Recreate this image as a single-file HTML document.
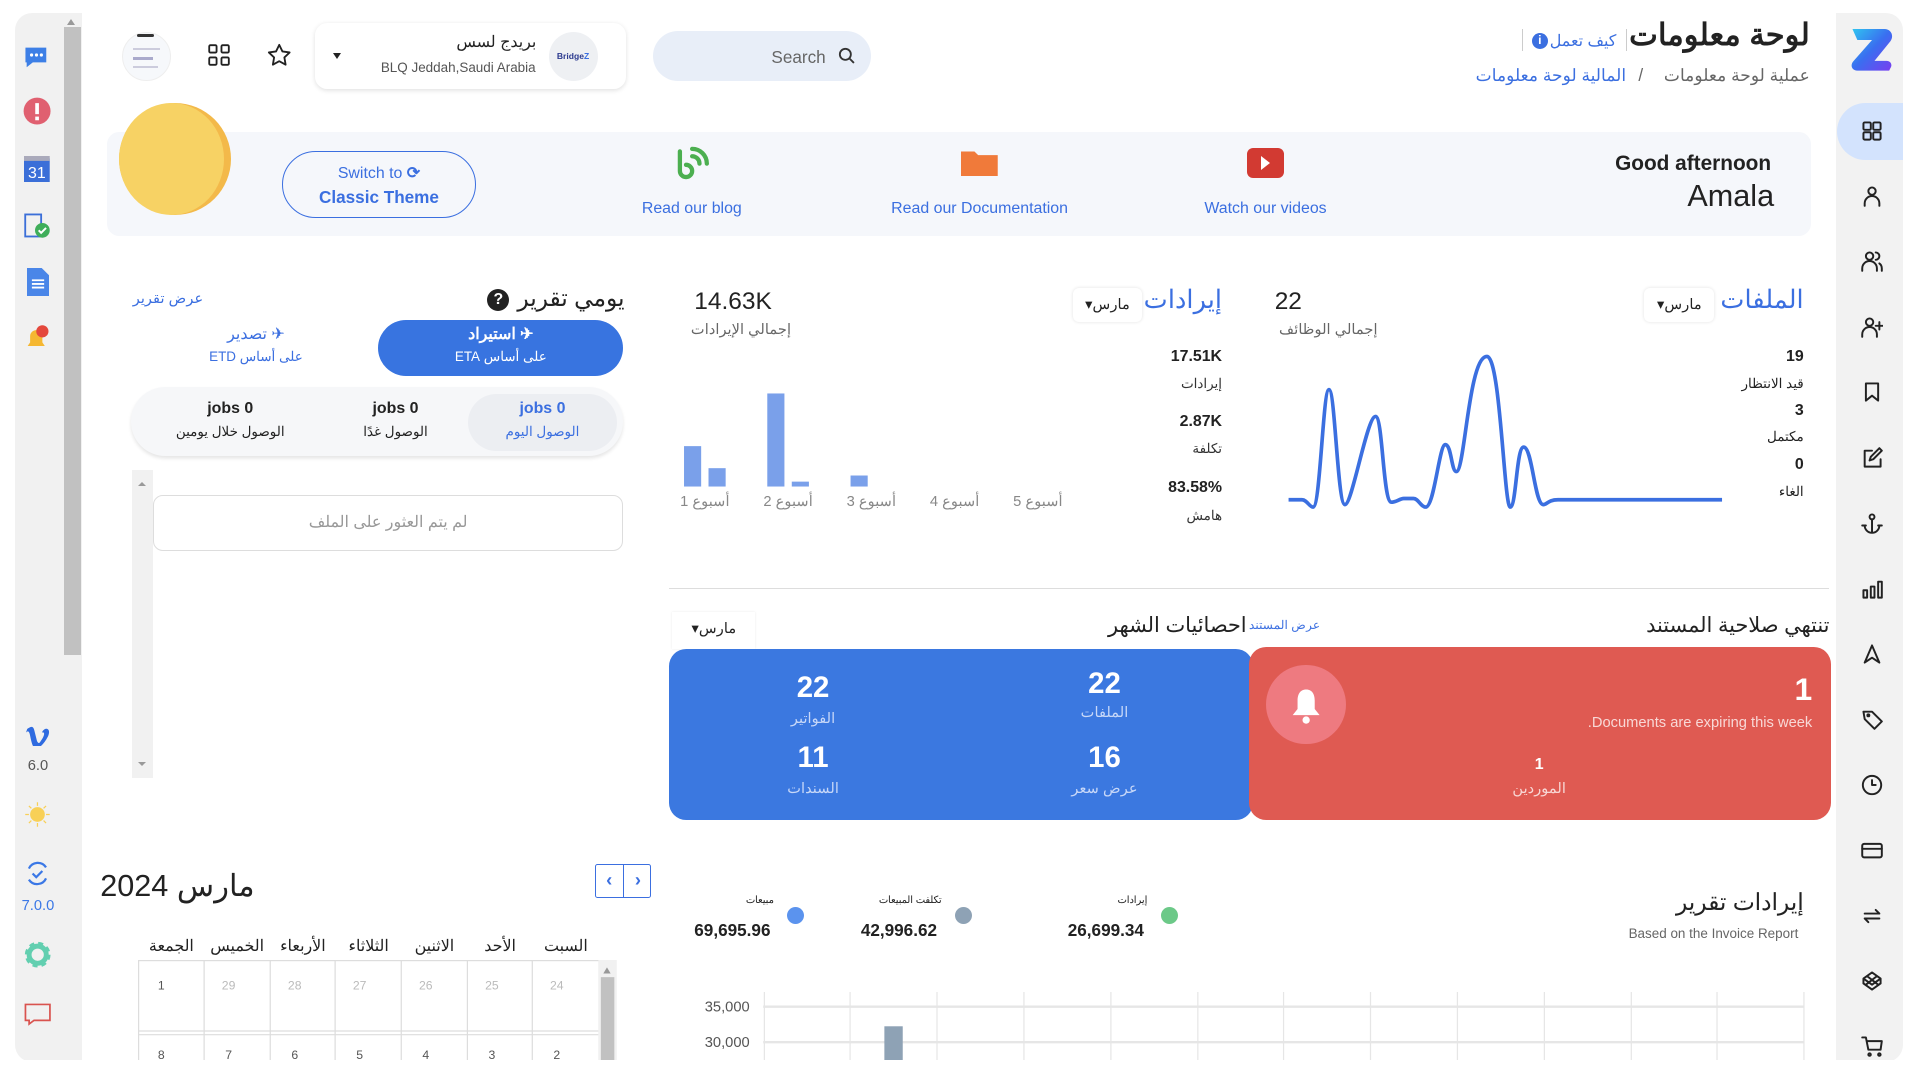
<!DOCTYPE html>
<html><head><meta charset="utf-8">
<style>
*{box-sizing:border-box;margin:0;padding:0}
html,body{width:1920px;height:1080px;overflow:hidden;background:#fff}
#w{zoom:1.22449;width:1568px;height:882px;position:relative;overflow:hidden;font-family:"Liberation Sans","Noto Sans CJK SC",sans-serif;color:#222}
.a{position:absolute}
.r{text-align:right;direction:rtl}
.c{text-align:center}
.blue{color:#3b6fe0}
.ico{width:18px;height:18px;fill:none;stroke:#222;stroke-width:1.6;stroke-linecap:round;stroke-linejoin:round}
</style></head><body><div id="w">

<!-- left sidebar -->
<div class="a" style="left:12px;top:11px;width:55px;height:856px;background:#f1f1f1;border-radius:14px 0 0 14px"></div>
<div class="a" style="left:52px;top:22px;width:14px;height:513px;background:#c1c1c1"></div>
<div class="a" style="left:55px;top:12px;width:0;height:0;border:4px solid transparent;border-bottom:5px solid #999"></div>
<svg class="a" style="left:19px;top:36px" width="22" height="22" viewBox="0 0 22 22"><path d="M2 3h17v12H8l-5 4v-4H2z" fill="#3d7fe6"/><circle cx="7" cy="9" r="1.3" fill="#fff"/><circle cx="11" cy="9" r="1.3" fill="#fff"/><circle cx="15" cy="9" r="1.3" fill="#fff"/></svg>
<svg class="a" style="left:19px;top:79px" width="23" height="23"><circle cx="11.5" cy="11.5" r="11" fill="#e06070"/><rect x="10" y="5" width="3" height="9" fill="#fff"/><rect x="10" y="16" width="3" height="3" fill="#fff"/></svg>
<svg class="a" style="left:20px;top:127px" width="21" height="22"><rect x="0" y="2" width="21" height="20" fill="#3b6fd8"/><rect x="0" y="0" width="21" height="4" fill="#aab"/><text x="10.5" y="18" font-size="13" fill="#fff" text-anchor="middle" font-family="Liberation Sans">31</text></svg>
<svg class="a" style="left:20px;top:173px" width="22" height="22"><rect x="1" y="2" width="13" height="18" fill="none" stroke="#3b6fd8" stroke-width="1.5"/><circle cx="15" cy="15" r="6" fill="#3fae5a"/><path d="M12 15l2 2 4-4" stroke="#fff" fill="none" stroke-width="1.6"/></svg>
<svg class="a" style="left:22px;top:219px" width="18" height="23"><path d="M0 0h12l6 6v17H0z" fill="#4a86e8"/><path d="M4 10h10M4 13h10M4 16h10" stroke="#fff" stroke-width="1.5"/></svg>
<svg class="a" style="left:20px;top:265px" width="22" height="22"><path d="M3 18h14l-2-3v-5a5 5 0 0 0-10 0v5z" fill="#f5b731"/><circle cx="15" cy="6" r="5" fill="#e4483c"/></svg>
<svg class="a" style="left:21px;top:591px" width="20" height="18"><path d="M1 4c3-2 5-3 6 2l2 8c1 2 2 2 3 0 3-4 4-8 1-7 2-5 8-4 5 3-3 6-7 10-10 10-3 0-4-8-5-12-1-3-2-2-3-1z" fill="#2f6be0"/></svg>
<div class="a c" style="left:12px;top:619px;width:38px;font-size:12px;color:#555">6.0</div>
<svg class="a" style="left:20px;top:654px" width="22" height="22"><circle cx="11" cy="11" r="6" fill="#f8d057"/><g stroke="#f8d057" stroke-width="1"><path d="M11 1v3M11 18v3M1 11h3M18 11h3M4 4l2 2M16 16l2 2M4 18l2-2M16 6l2-2"/></g></svg>
<svg class="a" style="left:20px;top:702px" width="22" height="22" fill="none" stroke="#3b78e6" stroke-width="1.8"><path d="M4 7a8 8 0 0 1 14-1M18 15a8 8 0 0 1-14 1"/><path d="M7 11l3 3 5-5"/></svg>
<div class="a c" style="left:12px;top:733px;width:38px;font-size:12px;color:#3b78e6">7.0.0</div>
<svg class="a" style="left:19px;top:768px" width="24" height="24"><circle cx="12" cy="12" r="8" fill="none" stroke="#62cfb0" stroke-width="5" stroke-dasharray="3.5 2.8"/><circle cx="12" cy="12" r="7" fill="none" stroke="#62cfb0" stroke-width="4"/></svg>
<svg class="a" style="left:19px;top:818px" width="24" height="20" fill="none" stroke="#d9534f" stroke-width="1.4"><path d="M2 2h20v13H9l-4 3v-3H2z"/></svg>

<!-- right sidebar -->
<div class="a" style="left:1499px;top:11px;width:55px;height:856px;background:#f2f2f2;border-radius:0 14px 14px 0"></div>
<svg class="a" style="left:1511px;top:24px" width="36" height="34" viewBox="0 0 36 34"><defs><linearGradient id="g" x1="0" y1="0" x2="1" y2="1"><stop offset="0" stop-color="#2fc6f0"/><stop offset=".5" stop-color="#3a6ef0"/><stop offset="1" stop-color="#7a3df0"/></linearGradient></defs><path d="M2 0h26c6 0 8 6 5 10L20 26h10c3 0 5 3 3 6l-1 2H6c-5 0-6-5-3-8L18 9H6z" fill="url(#g)"/></svg>
<div class="a" style="left:1500px;top:84px;width:54px;height:47px;background:#d3e3fd;border-radius:24px 0 0 24px"></div>
<svg class="a ico" style="left:1520px;top:98px"><rect x="2" y="2" width="6" height="6" rx="1"/><rect x="10" y="2" width="6" height="6" rx="1"/><rect x="2" y="10" width="6" height="6" rx="1"/><rect x="10" y="10" width="6" height="6" rx="1"/></svg>
<svg class="a ico" style="left:1520px;top:151px"><circle cx="9" cy="5" r="3"/><path d="M3 17v-2a6 6 0 0 1 12 0v2"/></svg>
<svg class="a ico" style="left:1520px;top:204px"><circle cx="7" cy="5" r="3"/><path d="M1 17v-2a6 6 0 0 1 12 0v2M12 2a3 3 0 0 1 0 6M15 11a5 5 0 0 1 2 4v2"/></svg>
<svg class="a ico" style="left:1520px;top:258px"><circle cx="7" cy="5" r="3"/><path d="M1 17v-2a6 6 0 0 1 12 0v2M15 5v6M12 8h6"/></svg>
<svg class="a ico" style="left:1520px;top:311px"><path d="M4 2h10v14l-5-4-5 4z"/></svg>
<svg class="a ico" style="left:1520px;top:365px"><path d="M9 3H3v13h13v-6M7 11l1-3 7-7 2 2-7 7z"/></svg>
<svg class="a ico" style="left:1520px;top:418px"><circle cx="9" cy="4" r="2"/><path d="M9 6v11M3 11a6 6 0 0 0 12 0M1 11h3M14 11h3"/></svg>
<svg class="a ico" style="left:1520px;top:472px"><rect x="2" y="10" width="3" height="6"/><rect x="8" y="7" width="3" height="9"/><rect x="14" y="3" width="3" height="13"/></svg>
<svg class="a ico" style="left:1520px;top:525px"><path d="M9 2l6 14-6-4-6 4z"/></svg>
<svg class="a ico" style="left:1520px;top:578px"><path d="M2 3h7l8 8-6 6-8-8z"/><circle cx="6" cy="6" r=".8"/></svg>
<svg class="a ico" style="left:1520px;top:632px"><circle cx="9" cy="9" r="7.5"/><path d="M9 5v4h3"/></svg>
<svg class="a ico" style="left:1520px;top:685px"><rect x="1" y="4" width="16" height="11" rx="1.5"/><path d="M1 8h16"/></svg>
<svg class="a ico" style="left:1520px;top:739px"><path d="M3 7h12l-3-3M15 11H3l3 3"/></svg>
<svg class="a ico" style="left:1520px;top:792px"><path d="M9 2l7 5-7 5-7-5zM2 7v4l7 5 7-5V7M5 5l9 7M13 5l-9 7"/></svg>
<svg class="a ico" style="left:1520px;top:845px"><path d="M1 2h3l2 10h10l1-7H5"/><circle cx="7" cy="16" r="1"/><circle cx="15" cy="16" r="1"/></svg>

<!-- header -->
<div class="a r" style="right:90px;top:15px;font-size:25px;font-weight:bold;color:#222">لوحة معلومات</div>
<div class="a" style="left:1328px;top:24px;width:1px;height:18px;background:#ccc"></div>
<div class="a" style="left:1243px;top:24px;width:1px;height:18px;background:#ccc"></div>
<div class="a r" style="right:248px;top:25px;font-size:13px" ><span class="blue">كيف تعمل</span></div>
<div class="a" style="left:1251px;top:27px;width:13px;height:13px;border-radius:50%;background:#3b6fe0;color:#fff;font-size:10px;font-weight:bold;text-align:center;line-height:13px">i</div>
<div class="a r" style="right:90px;top:53px;font-size:14px;color:#666">عملية لوحة معلومات</div>
<div class="a" style="left:1338px;top:53px;font-size:14px;color:#666">/</div>
<div class="a r" style="right:240px;top:53px;font-size:14px;color:#3b6fe0">المالية لوحة معلومات</div>

<div class="a" style="left:533px;top:25px;width:178px;height:41px;border-radius:21px;background:#e8eef8"></div>
<div class="a" style="left:630px;top:38px;font-size:14px;color:#666">Search</div>
<svg class="a" style="left:684px;top:38px" width="14" height="14" fill="none" stroke="#333" stroke-width="1.5"><circle cx="6" cy="6" r="4.5"/><path d="M9.5 9.5l3.5 3.5"/></svg>

<div class="a" style="left:257px;top:19px;width:254px;height:54px;border-radius:10px;background:#fff;box-shadow:0 1px 4px rgba(0,0,0,.12)"></div>
<div class="a r" style="right:1130px;top:26px;font-size:13px;color:#222">بريدج لسس</div>
<div class="a" style="left:311px;top:49px;font-size:11px;color:#555">BLQ Jeddah,Saudi Arabia</div>
<div class="a" style="left:448px;top:26px;width:40px;height:40px;border-radius:50%;background:#eef0f3;font-size:7px;font-weight:bold;text-align:center;line-height:40px;color:#2b3a8f">Bridge<span style="color:#3b6fe0">Z</span></div>
<div class="a" style="left:272px;top:43px;border:4px solid transparent;border-top:5px solid #222"></div>
<svg class="a" style="left:218px;top:35px" width="20" height="20" fill="none" stroke="#222" stroke-width="1.5" stroke-linejoin="round"><path d="M10 1.5l2.6 5.4 5.9.8-4.3 4.1 1 5.9L10 14.9l-5.2 2.8 1-5.9L1.5 7.7l5.9-.8z"/></svg>
<svg class="a" style="left:170px;top:36px" width="18" height="18" fill="none" stroke="#222" stroke-width="1.5"><rect x="1" y="1" width="6" height="6" rx="1"/><rect x="11" y="1" width="6" height="6" rx="1"/><rect x="1" y="11" width="6" height="6" rx="1"/><rect x="11" y="11" width="6" height="6" rx="1"/></svg>
<div class="a" style="left:100px;top:26px;width:40px;height:40px;border-radius:50%;background:#f6f8fb;border:1px solid #eee;overflow:hidden">
<div style="position:absolute;left:8px;top:12px;width:22px;height:2px;background:#ccd"></div>
<div style="position:absolute;left:8px;top:20px;width:16px;height:2px;background:#aac"></div>
<div style="position:absolute;left:8px;top:27px;width:20px;height:2px;background:#ccd"></div></div>
<div class="a" style="left:112px;top:28px;width:14px;height:2px;background:#333;border-radius:2px"></div>

<!-- banner -->
<div class="a" style="left:87px;top:108px;width:1392px;height:85px;border-radius:10px;background:#f5f7fb"></div>
<div class="a" style="left:97px;top:84px;width:92px;height:92px;border-radius:50%;background:#f3b94a"></div>
<div class="a" style="left:97px;top:84px;width:86px;height:92px;border-radius:50%;background:#f7d264"></div>
<div class="a c" style="left:230px;top:123px;width:159px;height:55px;border:1.5px solid #3b6fe0;border-radius:28px;background:#fff0"></div>
<div class="a c blue" style="left:230px;top:133px;width:159px;font-size:13px">Switch to <b>⟳</b></div>
<div class="a c blue" style="left:230px;top:153px;width:159px;font-size:14px;font-weight:bold">Classic Theme</div>
<svg class="a" style="left:551px;top:118px" width="30" height="32" fill="none" stroke="#4caf50" stroke-width="3.5" stroke-linecap="round"><path d="M4 6v16a5 5 0 1 0 5-5"/><path d="M14 4a12 12 0 0 1 12 12M14 10a6 6 0 0 1 6 6"/></svg>
<div class="a c blue" style="left:500px;top:163px;width:130px;font-size:13px">Read our blog</div>
<svg class="a" style="left:785px;top:122px" width="30" height="22"><path d="M0 2h11l3 3h16v17H0z" fill="#f07a3a"/></svg>
<div class="a c blue" style="left:720px;top:163px;width:160px;font-size:13px">Read our Documentation</div>
<div class="a" style="left:1018px;top:121px;width:31px;height:24px;border-radius:5px;background:#d23a32"></div>
<div class="a" style="left:1030px;top:127px;border:6px solid transparent;border-left:8px solid #fff;border-right:0"></div>
<div class="a c blue" style="left:970px;top:163px;width:127px;font-size:13px">Watch our videos</div>
<div class="a" style="left:1319px;top:124px;font-size:17px;font-weight:bold;color:#222">Good afternoon</div>
<div class="a" style="left:1378px;top:146px;font-size:25px;color:#222">Amala</div>

<!-- daily report -->
<div class="a r" style="right:1058px;top:233px;font-size:19px;color:#222">يومي تقرير</div>
<div class="a" style="left:398px;top:236px;width:18px;height:18px;border-radius:50%;background:#222;color:#fff;font-size:13px;font-weight:bold;text-align:center;line-height:18px">?</div>
<div class="a r blue" style="right:1402px;top:237px;font-size:12px">عرض تقرير</div>
<div class="a" style="left:309px;top:261px;width:200px;height:46px;border-radius:23px;background:#3874e0"></div>
<div class="a c" style="left:309px;top:265px;width:200px;font-size:13px;color:#fff;font-weight:bold;direction:rtl">✈ استيراد</div>
<div class="a c" style="left:309px;top:285px;width:200px;font-size:11px;color:#fff;direction:rtl">على أساس ETA</div>
<div class="a c blue" style="left:145px;top:265px;width:128px;font-size:13px;direction:rtl">✈ تصدير</div>
<div class="a c blue" style="left:145px;top:285px;width:128px;font-size:11px;direction:rtl">على أساس ETD</div>
<div class="a" style="left:107px;top:316px;width:402px;height:56px;border-radius:28px;background:#f6f7f9;box-shadow:0 2px 3px rgba(0,0,0,.1)"></div>
<div class="a" style="left:382px;top:322px;width:122px;height:46px;border-radius:24px;background:#eceef2"></div>
<div class="a c blue" style="left:382px;top:327px;width:122px;font-size:13px;font-weight:bold">jobs 0</div>
<div class="a c blue" style="left:382px;top:346px;width:122px;font-size:11px;direction:rtl">الوصول اليوم</div>
<div class="a c" style="left:263px;top:327px;width:120px;font-size:13px;font-weight:bold">jobs 0</div>
<div class="a c" style="left:263px;top:346px;width:120px;font-size:11px;direction:rtl">الوصول غدًا</div>
<div class="a c" style="left:128px;top:327px;width:120px;font-size:13px;font-weight:bold">jobs 0</div>
<div class="a c" style="left:128px;top:346px;width:120px;font-size:11px;direction:rtl">الوصول خلال يومين</div>
<div class="a" style="left:108px;top:384px;width:17px;height:251px;background:#f1f1f1"></div>
<div class="a" style="left:113px;top:390px;border:4px solid transparent;border-bottom:4px solid #999"></div>
<div class="a" style="left:113px;top:622px;border:4px solid transparent;border-top:4px solid #999"></div>
<div class="a c" style="left:125px;top:404px;width:384px;height:46px;border:1px solid #ddd;border-radius:8px;font-size:13px;color:#999;line-height:44px;direction:rtl">لم يتم العثور على الملف</div>

<!-- revenue -->
<div class="a" style="left:567px;top:235px;font-size:20px;color:#222">14.63K</div>
<div class="a r" style="right:922px;top:262px;font-size:12px;color:#666">إجمالي الإيرادات</div>
<div class="a r blue" style="right:570px;top:233px;font-size:21px">إيرادات</div>
<div class="a" style="left:876px;top:235px;width:57px;height:28px;border-radius:5px;box-shadow:0 0 3px rgba(0,0,0,.12);font-size:12px;text-align:center;line-height:28px;direction:rtl">مارس▾</div>
<div class="a r" style="right:570px;top:284px;font-size:13px;font-weight:bold">17.51K</div>
<div class="a r" style="right:570px;top:307px;font-size:11px;color:#333">إيرادات</div>
<div class="a r" style="right:570px;top:337px;font-size:13px;font-weight:bold">2.87K</div>
<div class="a r" style="right:570px;top:360px;font-size:11px;color:#333">تكلفة</div>
<div class="a r" style="right:570px;top:391px;font-size:13px;font-weight:bold">83.58%</div>
<div class="a r" style="right:570px;top:415px;font-size:11px;color:#333">هامش</div>
<svg class="a" style="left:550px;top:310px" width="330" height="110">
<g fill="#7aa0ea"><rect x="9" y="54" width="14" height="33"/><rect x="29" y="72" width="14" height="15"/><rect x="77" y="11" width="14" height="76"/><rect x="97" y="83" width="14" height="4"/><rect x="145" y="78" width="14" height="9"/></g>
<g font-size="12" fill="#888" font-family="Liberation Sans,Noto Sans CJK SC,sans-serif" text-anchor="middle"><text x="26" y="103">أسبوع 1</text><text x="94" y="103">أسبوع 2</text><text x="162" y="103">أسبوع 3</text><text x="230" y="103">أسبوع 4</text><text x="298" y="103">أسبوع 5</text></g></svg>

<!-- files -->
<div class="a" style="left:1041px;top:235px;font-size:20px;color:#222">22</div>
<div class="a r" style="right:443px;top:262px;font-size:12px;color:#666">إجمالي الوظائف</div>
<div class="a r blue" style="right:95px;top:233px;font-size:21px">الملفات</div>
<div class="a" style="left:1343px;top:235px;width:57px;height:28px;border-radius:5px;box-shadow:0 0 3px rgba(0,0,0,.12);font-size:12px;text-align:center;line-height:28px;direction:rtl">مارس▾</div>
<div class="a r" style="right:95px;top:284px;font-size:13px;font-weight:bold">19</div>
<div class="a r" style="right:95px;top:307px;font-size:11px">قيد الانتظار</div>
<div class="a r" style="right:95px;top:328px;font-size:13px;font-weight:bold">3</div>
<div class="a r" style="right:95px;top:350px;font-size:11px">مكتمل</div>
<div class="a r" style="right:95px;top:372px;font-size:13px;font-weight:bold">0</div>
<div class="a r" style="right:95px;top:395px;font-size:11px">الغاء</div>
<svg class="a" style="left:1045px;top:280px" width="370" height="140"><path d="M7 128H18C22 128 24 134 27 134C33 134 35 38 40 38C45 38 47 132 53 132C59 132 71 60 78 60C84 60 84 130 91 130C95 130 98 127 101 127H109C113 127 115 134 119 134C126 134 130 83 135 83C140 83 140 105 144 105C151 105 154 11 169 11C180 11 183 134 188 134C193 134 193 85 199 85C206 85 208 132 215 132C218 132 219 128 227 128H361" fill="none" stroke="#3b6fe0" stroke-width="3"/></svg>

<div class="a" style="left:546px;top:480px;width:948px;height:1px;background:#ddd"></div>

<!-- month stats -->
<div class="a r" style="right:74px;top:501px;font-size:17px">تنتهي صلاحية المستند</div>
<div class="a r" style="right:550px;top:501px;font-size:17px">احصائيات الشهر</div>
<div class="a" style="left:1020px;top:505px;font-size:10px;color:#3b6fe0">عرض المستند</div>
<div class="a" style="left:549px;top:500px;width:68px;height:30px;font-size:12px;text-align:center;line-height:28px;direction:rtl;box-shadow:0 0 2px rgba(0,0,0,.08)">مارس▾</div>
<div class="a" style="left:546px;top:530px;width:477px;height:140px;border-radius:14px;background:#3b78e0"></div>
<div class="a" style="left:1020px;top:528px;width:475px;height:142px;border-radius:14px;background:#df5a52"></div>
<div class="a c" style="left:842px;top:545px;width:120px;font-size:24px;font-weight:bold;color:#fff">22</div>
<div class="a c" style="left:842px;top:575px;width:120px;font-size:12px;color:#c8d8f8">الملفات</div>
<div class="a c" style="left:604px;top:548px;width:120px;font-size:24px;font-weight:bold;color:#fff">22</div>
<div class="a c" style="left:604px;top:580px;width:120px;font-size:12px;color:#c8d8f8">الفواتير</div>
<div class="a c" style="left:842px;top:605px;width:120px;font-size:24px;font-weight:bold;color:#fff">16</div>
<div class="a c" style="left:842px;top:637px;width:120px;font-size:12px;color:#c8d8f8">عرض سعر</div>
<div class="a c" style="left:604px;top:605px;width:120px;font-size:24px;font-weight:bold;color:#fff">11</div>
<div class="a c" style="left:604px;top:637px;width:120px;font-size:12px;color:#c8d8f8">السندات</div>
<div class="a" style="left:1034px;top:543px;width:65px;height:65px;border-radius:50%;background:#ee7a80"></div>
<svg class="a" style="left:1053px;top:561px" width="28" height="32"><path d="M14 2c-5 0-7 4-7 9v7l-4 5h22l-4-5v-7c0-5-2-9-7-9z" fill="#fff"/><circle cx="14" cy="27" r="3" fill="#fff"/></svg>
<div class="a r" style="right:88px;top:548px;font-size:26px;font-weight:bold;color:#fff">1</div>
<div class="a r" style="right:88px;top:584px;font-size:12px;color:#f8d8d6;direction:ltr">.Documents are expiring this week</div>
<div class="a c" style="left:1197px;top:617px;width:120px;font-size:13px;font-weight:bold;color:#fff">1</div>
<div class="a c" style="left:1197px;top:637px;width:120px;font-size:12px;color:#f8d8d6">الموردين</div>

<!-- calendar -->
<div class="a r" style="right:1360px;top:710px;font-size:25px;color:#222">مارس 2024</div>
<div class="a" style="left:486px;top:706px;width:46px;height:27px;border:1px solid #3b6fe0;border-radius:2px"></div>
<div class="a" style="left:509px;top:706px;width:1px;height:27px;background:#3b6fe0"></div>
<div class="a c blue" style="left:486px;top:710px;width:23px;font-size:15px;font-weight:bold">‹</div>
<div class="a c blue" style="left:510px;top:710px;width:22px;font-size:15px;font-weight:bold">›</div>
<div class="a" style="left:113px;top:764px;width:376px;font-size:13px;display:flex;direction:rtl;color:#222">
<span style="width:53.7px;text-align:center">السبت</span><span style="width:53.7px;text-align:center">الأحد</span><span style="width:53.7px;text-align:center">الاثنين</span><span style="width:53.7px;text-align:center">الثلاثاء</span><span style="width:53.7px;text-align:center">الأربعاء</span><span style="width:53.7px;text-align:center">الخميس</span><span style="width:53.7px;text-align:center">الجمعة</span></div>
<svg class="a" style="left:113px;top:784px" width="392" height="90">
<g stroke="#ddd" fill="none"><rect x=".5" y=".5" width="376" height="95"/><path d="M0 58h376M0 61h376"/><path d="M54 0v90M108 0v90M161 0v90M215 0v90M269 0v90M322 0v90"/></g>
<rect x="376" y="0" width="15" height="90" fill="#f1f1f1"/><rect x="378" y="14" width="11" height="76" fill="#c1c1c1"/><path d="M380 11l3-5 3 5z" fill="#999"/>
<g font-size="10" fill="#bbb" text-anchor="middle" font-family="Liberation Sans"><text x="342" y="24">24</text><text x="289" y="24">25</text><text x="235" y="24">26</text><text x="181" y="24">27</text><text x="128" y="24">28</text><text x="74" y="24">29</text><text x="19" y="24" fill="#555">1</text>
<g fill="#555"><text x="342" y="81">2</text><text x="289" y="81">3</text><text x="235" y="81">4</text><text x="181" y="81">5</text><text x="128" y="81">6</text><text x="74" y="81">7</text><text x="19" y="81">8</text></g></g></svg>

<!-- revenue report -->
<div class="a r" style="right:95px;top:726px;font-size:19px">إيرادات تقرير</div>
<div class="a" style="left:1330px;top:756px;font-size:11px;color:#666">Based on the Invoice Report</div>
<div class="a r" style="right:936px;top:731px;font-size:8px">مبيعات</div>
<div class="a" style="left:567px;top:751px;font-size:14px;font-weight:bold">69,695.96</div>
<div class="a" style="left:643px;top:741px;width:14px;height:14px;border-radius:50%;background:#5b93ee"></div>
<div class="a r" style="right:799px;top:731px;font-size:8px">تكلفت المبيعات</div>
<div class="a" style="left:703px;top:751px;font-size:14px;font-weight:bold">42,996.62</div>
<div class="a" style="left:780px;top:741px;width:14px;height:14px;border-radius:50%;background:#8ea2b5"></div>
<div class="a r" style="right:631px;top:731px;font-size:8px">إيرادات</div>
<div class="a" style="left:872px;top:751px;font-size:14px;font-weight:bold">26,699.34</div>
<div class="a" style="left:948px;top:741px;width:14px;height:14px;border-radius:50%;background:#6cc988"></div>
<svg class="a" style="left:560px;top:810px" width="920" height="60">
<g stroke="#e6e6e6"><path d="M63 12h850M63 41h850" stroke-width="2"/><path d="M64 0v60M134 0v60M205 0v60M276 0v60M347 0v60M418 0v60M488 0v60M559 0v60M630 0v60M701 0v60M772 0v60M842 0v60M913 0v60"/></g>
<rect x="162" y="28" width="15" height="40" fill="#8ea2b5"/>
<g font-size="12" fill="#555" text-anchor="end" font-family="Liberation Sans"><text x="52" y="16">35,000</text><text x="52" y="45">30,000</text></g></svg>

<div class="a" style="left:0;top:866px;width:1568px;height:16px;background:#fff"></div>
</div></body></html>
